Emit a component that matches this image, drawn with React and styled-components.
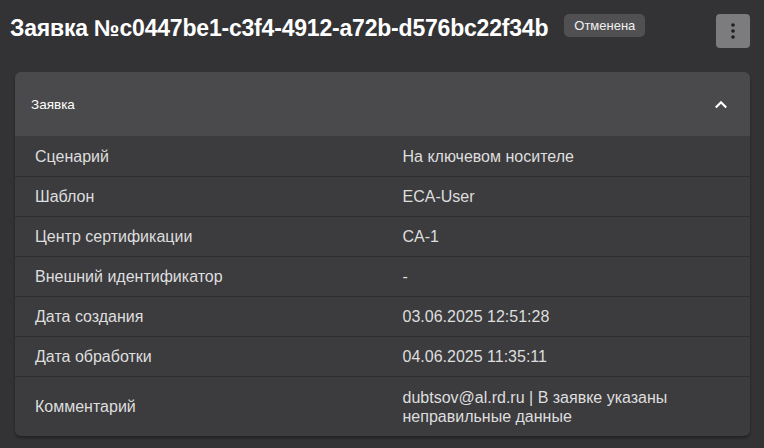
import React from 'react';
import styled, { createGlobalStyle } from 'styled-components';

const GlobalStyle = createGlobalStyle`
  html, body {
    margin: 0;
    padding: 0;
    background: #333335;
    font-family: "Liberation Sans", Arial, sans-serif;
    color: #e6e6e6;
  }
`;

const Page = styled.div`
  padding: 14px 14px 12px 15px;
`;

const TopBar = styled.div`
  display: flex;
  align-items: flex-start;
  justify-content: space-between;
  margin-left: -5px;
  height: 34px;
`;

const TitleGroup = styled.div`
  display: flex;
  align-items: flex-start;
  gap: 16px;
`;

const Title = styled.h1`
  margin: 0;
  font-size: 23px;
  line-height: 28px;
  font-weight: 700;
  color: #ffffff;
  letter-spacing: -0.2px;
`;

const Chip = styled.span`
  display: inline-flex;
  align-items: center;
  height: 23px;
  padding: 0 10px;
  border-radius: 5px;
  background: #505052;
  color: #f0f0f0;
  font-size: 13px;
`;

const MenuButton = styled.button`
  width: 34px;
  height: 34px;
  border: none;
  border-radius: 4px;
  background: #7c7c7f;
  display: flex;
  align-items: center;
  justify-content: center;
  padding: 0;
`;

const Panel = styled.section`
  margin-top: 24px;
  border-radius: 6px;
  background: #3c3c3e;
  overflow: hidden;
  box-shadow: 0 2px 3px rgba(0, 0, 0, 0.35);
`;

const PanelHeader = styled.div`
  display: flex;
  align-items: center;
  justify-content: space-between;
  height: 64px;
  padding: 0 22px 0 16px;
  background: #4a4a4c;
  color: #ffffff;
  font-size: 13.5px;
`;

const Table = styled.div`
  display: grid;
  grid-template-columns: 1fr 1fr;
`;

const Cell = styled.div`
  display: flex;
  align-items: center;
  min-height: ${(p) => (p.$tall ? 60 : 40)}px;
  box-sizing: border-box;
  padding: 0 20px;
  font-size: 16px;
  line-height: 19px;
  color: #dedede;
  border-top: ${(p) => (p.$first ? 'none' : '1px solid #2e2e30')};
`;

const rows = [
  ['Сценарий', 'На ключевом носителе'],
  ['Шаблон', 'ECA-User'],
  ['Центр сертификации', 'CA-1'],
  ['Внешний идентификатор', '-'],
  ['Дата создания', '03.06.2025 12:51:28'],
  ['Дата обработки', '04.06.2025 11:35:11'],
  ['Комментарий', 'dubtsov@al.rd.ru | В заявке указаны неправильные данные'],
];

function DotsIcon() {
  return (
    <svg width="4" height="16" viewBox="0 0 4 16">
      <circle cx="2" cy="2" r="1.8" fill="#1e1e1e" />
      <circle cx="2" cy="8" r="1.8" fill="#1e1e1e" />
      <circle cx="2" cy="14" r="1.8" fill="#1e1e1e" />
    </svg>
  );
}

function ChevronUp() {
  return (
    <svg width="14" height="9" viewBox="0 0 14 9">
      <path d="M1.8 7.5 L7 2.3 L12.2 7.5" stroke="#ffffff" strokeWidth="2.2" fill="none" />
    </svg>
  );
}

function App() {
  return (
    <Page>
      <GlobalStyle />
      <TopBar>
        <TitleGroup>
          <Title>Заявка №c0447be1-c3f4-4912-a72b-d576bc22f34b</Title>
          <Chip>Отменена</Chip>
        </TitleGroup>
        <MenuButton aria-label="menu">
          <DotsIcon />
        </MenuButton>
      </TopBar>
      <Panel>
        <PanelHeader>
          <span>Заявка</span>
          <ChevronUp />
        </PanelHeader>
        <Table>
          {rows.map(([label, value], i) => (
            <React.Fragment key={label}>
              <Cell $first={i === 0} $tall={i === rows.length - 1}>{label}</Cell>
              <Cell $first={i === 0} $tall={i === rows.length - 1}>{value}</Cell>
            </React.Fragment>
          ))}
        </Table>
      </Panel>
    </Page>
  );
}

export default App;
